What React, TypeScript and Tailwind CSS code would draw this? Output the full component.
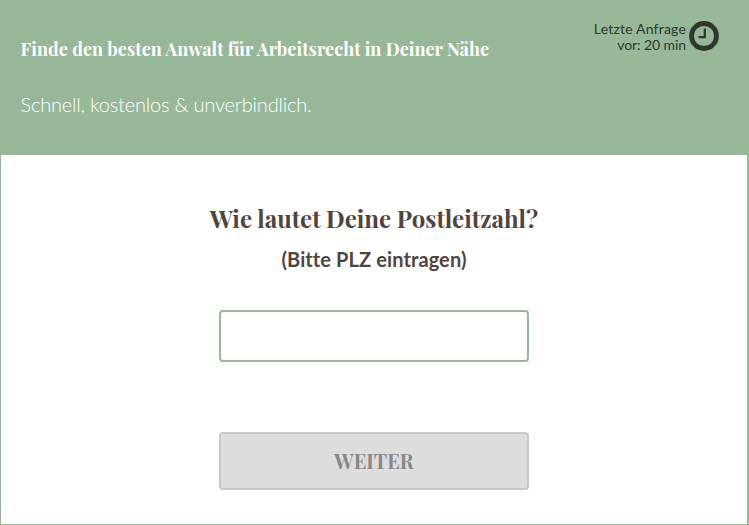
export default function App() {
  return (
    <main className="flex h-[525px] w-[749px] flex-col border border-r-2 border-t-0 border-[#98b798] bg-white font-['Lato','Open_Sans',sans-serif]">
      <header className="flex h-[155px] shrink-0 justify-between bg-[#98b798] pl-[19.5px] pr-[28px]">
        <div className="text-white">
          <h1 className="mt-[36px] whitespace-nowrap font-['Playfair_Display','Liberation_Serif',serif] text-[18px] font-bold leading-[26px] tracking-[0.04px]">Finde den besten Anwalt für Arbeitsrecht in Deiner Nähe</h1>
          <p className="mt-[29px] whitespace-nowrap text-[20px] font-light leading-[26px] tracking-[-0.18px]">Schnell, kostenlos &amp; unverbindlich.</p>
        </div>
        <div className="mt-[21px] flex h-[31px] gap-[3px] text-[#2f382f]">
          <p className="whitespace-nowrap text-right text-[14px] leading-4">
            <span className="tracking-[0.2px]">Letzte Anfrage</span>
            <br />
            <span className="tracking-[-0.08px]">vor: 20 min</span>
          </p>
          <svg className="h-[30px] w-[30px]" viewBox="0 0 30 30" fill="none" stroke="currentColor">
            <circle cx="15" cy="15" r="12.5" strokeWidth="4.8" />
            <path d="M15.8 7.5v8.6H9.5" strokeWidth="2.3" />
          </svg>
        </div>
      </header>
      <section className="flex flex-col items-center text-[#51443f]">
        <h2 className="mt-[45px] whitespace-nowrap font-['Playfair_Display','Liberation_Serif',serif] text-[24px] font-bold leading-9">Wie lautet Deine Postleitzahl?</h2>
        <p className="mt-[9px] text-[20px] font-bold leading-7 tracking-[0.1px]">(Bitte PLZ eintragen)</p>
        <input aria-label="Postleitzahl" className="mt-[37px] h-[52px] w-[310px] rounded-[4px] border-2 border-[#98b798] bg-white px-3 outline-none" />
        <button className="mt-[70px] h-[58px] w-[310px] rounded-[4px] border-2 border-[#c8c8c8] bg-[#ddd] font-['Playfair_Display','Liberation_Serif',serif] text-[20px] font-bold text-[#888]">WEITER</button>
      </section>
    </main>
  );
}
